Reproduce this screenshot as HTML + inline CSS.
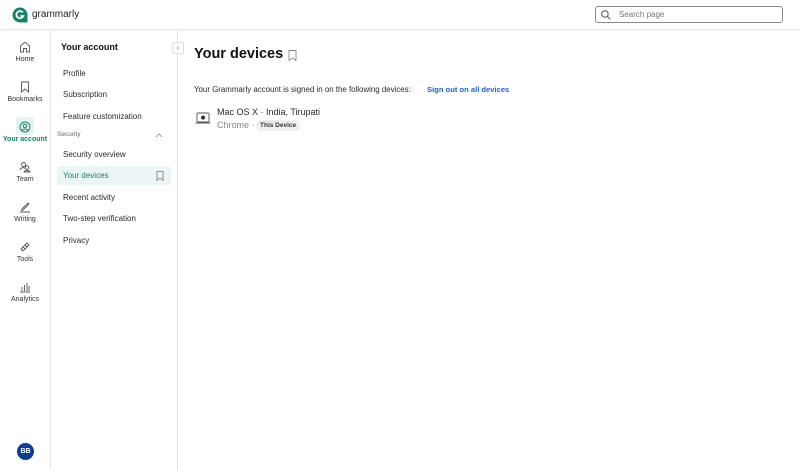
<!DOCTYPE html>
<html><head><meta charset="utf-8"><style>
*{margin:0;padding:0;box-sizing:border-box}
body{width:800px;height:470px;background:#fff;font-family:"Liberation Sans",sans-serif;color:#1f1f1f;position:relative;overflow:hidden}
.hdr{position:absolute;left:0;top:0;width:800px;height:30px;border-bottom:1px solid #e6e6e6;box-shadow:0 1px 2px rgba(0,0,0,.04)}
.abs{position:absolute}
.rail{position:absolute;left:0;top:31px;width:51px;height:439px;border-right:1px solid #e4e4e4}
.ni{position:absolute;left:0;width:50px;text-align:center;font-size:7px;color:#333}
.ni svg{display:block;margin:0 auto 3px}
.panel{position:absolute;left:51px;top:31px;width:127px;height:439px;border-right:1px solid #e4e4e4}
.it{position:absolute;left:12px;font-size:8px;color:#2a2a2a}
</style></head><body>
<div class="hdr">
  <svg class="abs" style="left:12px;top:7px" width="16" height="16" viewBox="0 0 16 16"><circle cx="8" cy="8" r="7.5" fill="#15836b"/><path d="M8 8H15.5V15.5H8Z" fill="#15836b"/><path d="M10.8 5.4A3.6 3.6 0 1 0 11.4 9H8.3" fill="none" stroke="#fff" stroke-width="1.7"/></svg>
  <div class="abs" style="left:32px;top:9px;font-size:10px;color:#222">grammarly</div>
  <div class="abs" style="left:595px;top:6px;width:188px;height:17px;border:1px solid #8a8a8a;border-radius:3px"></div>
  <svg class="abs" style="left:601px;top:10px" width="10" height="10" viewBox="0 0 10 10"><circle cx="4" cy="4" r="3.2" fill="none" stroke="#555" stroke-width="1"/><path d="M6.4 6.4L9.3 9.3" stroke="#555" stroke-width="1"/></svg>
  <div class="abs" style="left:619px;top:10px;font-size:8px;color:#777">Search page</div>
</div>
<div class="rail">
  <div class="ni" style="top:10px"><svg width="12" height="12" viewBox="0 0 12 12"><path d="M1.5 11V5L6 1.2 10.5 5V11H7.5V7.5H4.5V11Z" fill="none" stroke="#555" stroke-width="0.9"/></svg>Home</div>
  <div class="ni" style="top:50px"><svg width="12" height="12" viewBox="0 0 12 12"><path d="M2.5 1H9.5V11L6 8 2.5 11Z" fill="none" stroke="#555" stroke-width="0.9"/></svg>Bookmarks</div>
  <div class="abs" style="left:16px;top:86px;width:18px;height:18px;background:#e4f4f1;border-radius:3px"></div>
  <div class="ni" style="top:90px;color:#15836b;font-weight:bold"><svg width="12" height="12" viewBox="0 0 12 12"><circle cx="6" cy="6" r="5" fill="none" stroke="#15836b" stroke-width="1"/><circle cx="6" cy="5" r="1.8" fill="none" stroke="#15836b" stroke-width="1"/><path d="M2.8 9.6C4 7.6 8 7.6 9.2 9.6" fill="none" stroke="#15836b" stroke-width="1"/></svg>Your account</div>
  <div class="ni" style="top:130px"><svg width="12" height="12" viewBox="0 0 12 12"><circle cx="4.5" cy="3.5" r="2" fill="none" stroke="#555" stroke-width="0.9"/><circle cx="8" cy="6.5" r="1.8" fill="none" stroke="#555" stroke-width="0.9"/><path d="M1 9C1.5 6.5 5 6 6 7.5M5 11C5.5 9 10.5 9 11 11Z" fill="none" stroke="#555" stroke-width="0.9"/></svg>Team</div>
  <div class="ni" style="top:170px"><svg width="12" height="12" viewBox="0 0 12 12"><path d="M3 8L9 2 10 3 4 9 2.5 9.5ZM1 11H11" fill="none" stroke="#555" stroke-width="0.9"/></svg>Writing</div>
  <div class="ni" style="top:210px"><svg width="12" height="12" viewBox="0 0 12 12"><path d="M2 8L8 2 10 4 4 10ZM4 6L6 8M6 4L8 6" fill="none" stroke="#555" stroke-width="0.9"/></svg>Tools</div>
  <div class="ni" style="top:250px"><svg width="12" height="12" viewBox="0 0 12 12"><path d="M1 11H11M3 10V6M5.5 10V4M8 10V2M10 10V5" fill="none" stroke="#555" stroke-width="0.9"/></svg>Analytics</div>
  <div class="abs" style="left:17px;top:412px;width:17px;height:17px;border-radius:50%;background:#0b3d91;color:#fff;font-size:7px;font-weight:bold;text-align:center;line-height:17px">BB</div>
</div>
<div class="panel">
  <div class="abs" style="left:10px;top:11px;font-size:9px;font-weight:bold;color:#111">Your account</div>
  <div class="abs" style="left:121px;top:11px;width:12px;height:12px;border:1px solid #ddd;background:#fff;border-radius:2px;font-size:8px;color:#777;text-align:center;line-height:10px">‹</div>
  <div class="it" style="top:38px">Profile</div>
  <div class="it" style="top:59px">Subscription</div>
  <div class="it" style="top:81px">Feature customization</div>
  <div class="abs" style="left:6px;top:100px;font-size:6.5px;color:#666">Security</div>
  <svg class="abs" style="left:104px;top:101px" width="8" height="6" viewBox="0 0 8 6"><path d="M1 5L4 2 7 5" fill="none" stroke="#888" stroke-width="0.8"/></svg>
  <div class="it" style="top:119px">Security overview</div>
  <div class="abs" style="left:6px;top:135px;width:114px;height:19px;background:#eaf6f5;border-radius:3px"></div>
  <div class="it" style="top:140px;color:#15836b">Your devices</div>
  <svg class="abs" style="left:105px;top:140px" width="8" height="10" viewBox="0 0 8 10"><path d="M1 0.5H7V9.5L4 7 1 9.5Z" fill="none" stroke="#777" stroke-width="0.8"/></svg>
  <div class="it" style="top:162px">Recent activity</div>
  <div class="it" style="top:183px">Two-step verification</div>
  <div class="it" style="top:205px">Privacy</div>
</div>
<div class="abs" style="left:194px;top:46px;font-size:14.5px;font-weight:bold;color:#111">Your devices</div>
<svg class="abs" style="left:288px;top:50px" width="9" height="11" viewBox="0 0 9 11"><path d="M1 0.5H8V10.5L4.5 8 1 10.5Z" fill="none" stroke="#888" stroke-width="0.9"/></svg>
<div class="abs" style="left:194px;top:85px;font-size:7.9px;color:#2a2a2a">Your Grammarly account is signed in on the following devices:</div>
<div class="abs" style="left:427px;top:85px;font-size:7.6px;font-weight:bold;color:#1a5fe0">Sign out on all devices</div>
<svg class="abs" style="left:195px;top:112px" width="16" height="13" viewBox="0 0 16 13"><rect x="2" y="1" width="12" height="9" rx="1" fill="none" stroke="#555" stroke-width="0.9"/><path d="M0.5 11H15.5" stroke="#555" stroke-width="1"/><circle cx="8" cy="5.6" r="2" fill="#333"/></svg>
<div class="abs" style="left:217px;top:107px;font-size:9px;color:#2a2a2a">Mac OS X · India, Tirupati</div>
<div class="abs" style="left:217px;top:120px;font-size:9px;color:#888">Chrome ·</div>
<div class="abs" style="left:256px;top:120px;height:11px;padding:0 4px;background:#eee;border-radius:6px;font-size:6.5px;line-height:11px;color:#333;font-weight:bold">This Device</div>
</body></html>
